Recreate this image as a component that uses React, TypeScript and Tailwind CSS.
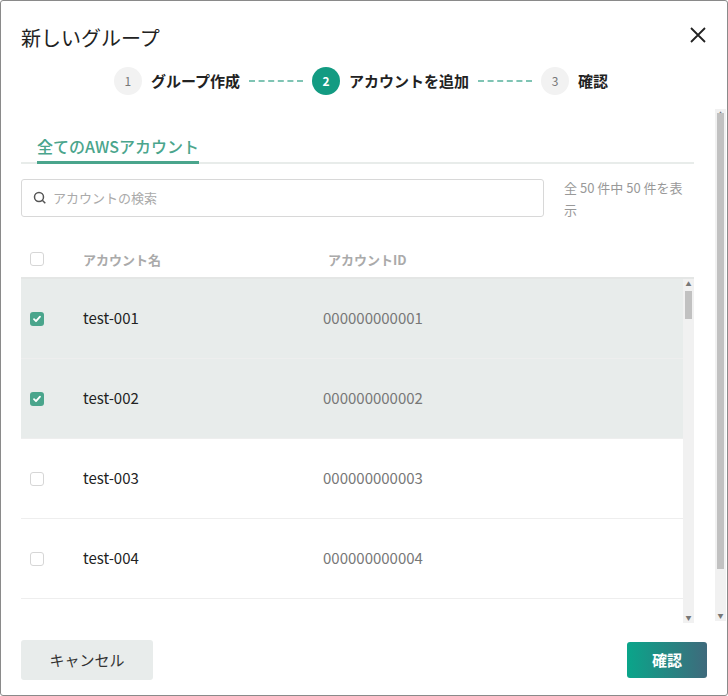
import React from "react";

const rows = [1, 2, 3, 4, 5, 6, 7, 8];

function Check({ on }: { on: boolean }) {
  return on ? (
    <div className="w-[14px] h-[14px] rounded-[3px] bg-[#4aa58c] flex items-center justify-center">
      <svg width="10" height="10" viewBox="0 0 10 10"><path d="M2 5.2l2 2 4-4.5" fill="none" stroke="white" strokeWidth="1.8" strokeLinecap="round" strokeLinejoin="round" /></svg>
    </div>
  ) : (
    <div className="w-[14px] h-[14px] rounded-[3px] border border-[#d6d6d6] bg-white" />
  );
}

function Scroll({ h, thumbTop, thumbH }: { h: string; thumbTop: number; thumbH: number }) {
  return (
    <div className={`w-[11px] ${h} bg-[#f1f1f1] relative shrink-0`}>
      <div className="absolute top-0 left-0 right-0 h-[10px] text-[6px] text-[#777] text-center leading-[10px]">▲</div>
      <div className="absolute left-[2px] right-[2px] bg-[#c1c1c1]" style={{ top: thumbTop, height: thumbH }} />
      <div className="absolute bottom-0 left-0 right-0 h-[10px] text-[6px] text-[#777] text-center leading-[10px]">▼</div>
    </div>
  );
}

export default function App() {
  return (
    <div className="w-[728px] h-[696px] bg-white border border-[#8a8a8a] rounded-[3px] flex flex-col relative overflow-hidden" style={{ fontFamily: '"Noto Sans CJK JP", "Noto Sans", sans-serif' }}>
      <div className="flex items-center justify-between pl-5 pr-5 pt-[20px] h-[54px] shrink-0">
        <div className="text-[20px] text-[#222]">新しいグループ</div>
        <svg width="18" height="18" viewBox="0 0 18 18" className="mt-[-6px]"><path d="M2 2l14 14M16 2L2 16" stroke="#222" strokeWidth="1.8" /></svg>
      </div>
      <div className="flex items-center justify-center gap-[9px] h-[54px] pb-[2px] shrink-0 pr-[6px]">
        <div className="w-[28px] h-[28px] rounded-full bg-[#f2f2f2] text-[12px] text-[#777] flex items-center justify-center">1</div>
        <span className="text-[15px] font-bold text-[#222]">グループ作成</span>
        <div className="w-[54px] border-t-2 border-dashed border-[#7fc4b4]" />
        <div className="w-[28px] h-[28px] rounded-full bg-[#139b82] text-[12px] font-bold text-white flex items-center justify-center">2</div>
        <span className="text-[15px] font-bold text-[#222]">アカウントを追加</span>
        <div className="w-[54px] border-t-2 border-dashed border-[#7fc4b4]" />
        <div className="w-[28px] h-[28px] rounded-full bg-[#f2f2f2] text-[12px] text-[#777] flex items-center justify-center">3</div>
        <span className="text-[15px] font-bold text-[#222]">確認</span>
      </div>
      <div className="flex flex-1 min-h-0">
        <div className="flex-1 pl-5 pr-[21px] min-w-0">
          <div className="mt-[25px] border-b-2 border-[#e8ecea] flex">
            <div className="ml-[16px] text-[16px] text-[#4aa58c] font-medium pb-[3px] border-b-[3px] border-[#4aa58c] mb-[-2px]">全てのAWSアカウント</div>
          </div>
          <div className="flex mt-[15px] gap-[20px]">
            <div className="w-[523px] h-[38px] border border-[#d8d8d8] rounded-[3px] flex items-center px-[11px] gap-[6px] shrink-0">
              <svg width="14" height="14" viewBox="0 0 14 14"><circle cx="6" cy="6" r="4.5" fill="none" stroke="#555" strokeWidth="1.5" /><path d="M9.3 9.3l3 3" stroke="#555" strokeWidth="1.5" /></svg>
              <span className="text-[13px] text-[#aaa]">アカウントの検索</span>
            </div>
            <div className="text-[13px] text-[#999] leading-[22px] mt-[-2px]">全 50 件中 50 件を表示</div>
          </div>
          <div className="flex items-end pb-[8px] h-[58px] border-b-2 border-[#e4e6e5]">
            <div className="w-[62px] pl-[9px] pb-[3px]"><Check on={false} /></div>
            <div className="w-[245px] text-[13px] font-bold text-[#aaa]">アカウント名</div>
            <div className="text-[13px] font-bold text-[#aaa]">アカウントID</div>
          </div>
          <div className="flex h-[344px]">
            <div className="flex-1 overflow-hidden">
              {rows.map((n) => {
                const sel = n <= 2;
                return (
                  <div key={n} className={`flex items-center h-[80px] border-b border-[#eeeeee] ${sel ? "bg-[#e8eceb]" : "bg-white"}`}>
                    <div className="w-[62px] pl-[9px]"><Check on={sel} /></div>
                    <div className="w-[240px] text-[15px] text-[#222]">test-00{n}</div>
                    <div className="text-[15px] text-[#777]">00000000000{n}</div>
                  </div>
                );
              })}
            </div>
            <Scroll h="h-[344px]" thumbTop={12} thumbH={28} />
          </div>
        </div>
        <div className="pr-[1px]">
          <Scroll h="h-[512px]" thumbTop={4} thumbH={456} />
        </div>
      </div>
      <div className="flex items-start justify-between px-5 h-[76px] pt-[21px] shrink-0">
        <div className="w-[132px] h-[40px] bg-[#e8eceb] rounded-[3px] flex items-center justify-center text-[15px] text-[#333]">キャンセル</div>
        <div className="w-[80px] h-[36px] mt-[2px] rounded-[3px] flex items-center justify-center text-[15px] font-bold text-white bg-[linear-gradient(90deg,#0aa58a,#3f6a7c)]">確認</div>
      </div>
    </div>
  );
}
